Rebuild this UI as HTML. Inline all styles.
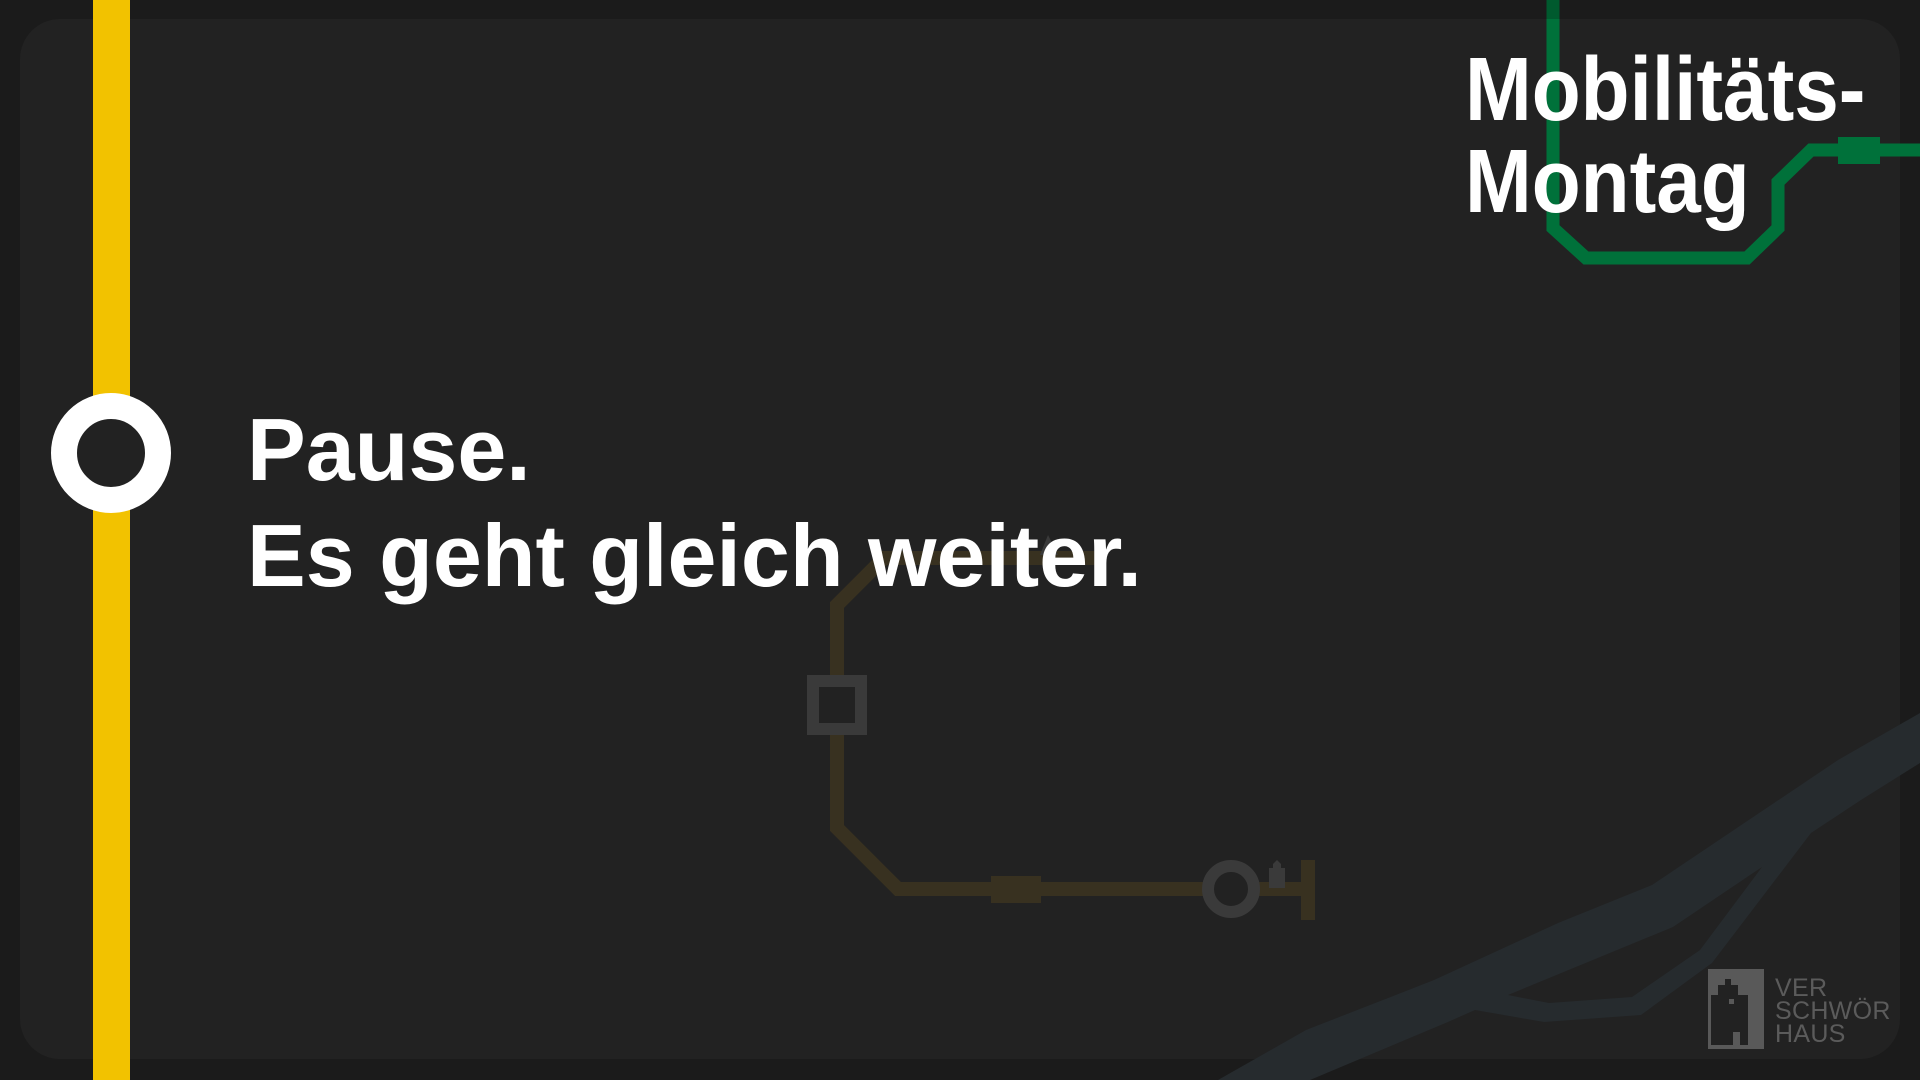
<!DOCTYPE html>
<html><head><meta charset="utf-8"><style>
html,body{margin:0;padding:0;width:1920px;height:1080px;overflow:hidden;background:#1b1b1b;font-family:"Liberation Sans",sans-serif}
.panel{position:absolute;left:20px;top:19px;width:1880px;height:1040px;border-radius:40px;background:#222222;overflow:hidden}
svg{position:absolute;left:0;top:0}
.t{position:absolute;left:247px;color:#fff;font-weight:bold;font-size:88px;line-height:1;white-space:nowrap}
.title{position:absolute;left:1465px;color:#fff;font-weight:bold;font-size:90px;line-height:1;white-space:nowrap;transform-origin:0 0;transform:scaleX(0.89)}
.logo{position:absolute;left:1775px;color:#5b5b5b;font-size:25px;line-height:23px;letter-spacing:0.3px}
</style></head><body>
<div class="panel"></div>
<svg width="1920" height="1080" viewBox="0 0 1920 1080">
 <path fill-rule="evenodd" fill="#262b2e" d="M1218,1080 L1306,1030 L1434,980 L1558,923 L1652,885 L1838,760 L1920,713 L1920,763 L1861,800 L1811,833 L1712,963 L1641,1015 L1544,1022 L1475,1010 L1448,1022 L1310,1080 Z M1762,867 L1673,927 L1508,995 L1549,1003 L1632,997 L1700,950 Z"/>
 <g fill="none" stroke-linejoin="miter">
  <polyline points="1100,558 884,558 837,605 837,828 898,889 1308,889" stroke="#383120" stroke-width="14"/>
  <polyline points="1553,-5 1553,228 1586,258 1747,258 1778,228 1778,182 1811,150 1925,150" stroke="#00713a" stroke-width="13"/>
  <polyline points="1553,0 1553,19" stroke="#005a2e" stroke-width="13"/>
 </g>
 <rect x="1838" y="137" width="42" height="27" fill="#00713a"/>
 <rect x="991" y="876" width="50" height="27" fill="#383120"/>
 <rect x="1301" y="860" width="14" height="60" fill="#383120"/>
 <rect x="813" y="681" width="48" height="48" fill="#222" stroke="#3a3a3a" stroke-width="12"/>
 <circle cx="1231" cy="889" r="23" fill="#222" stroke="#3a3a3a" stroke-width="12"/>
 <path d="M1269,888 L1269,868 L1273,868 L1273,864 L1277,860 L1281,864 L1281,868 L1285,868 L1285,888 Z" fill="#3a3a3a"/>
 <path d="M1040,555 L1048,535 L1058,555 Z" fill="#3a3a3a"/>
 <rect x="93" y="0" width="37" height="1080" fill="#f2c200"/>
 <circle cx="111" cy="453" r="47" fill="#222" stroke="#fff" stroke-width="26"/>
 <rect x="1708" y="969" width="56" height="80" fill="#595959"/>
 <path d="M1711,1045 L1711,995 L1718,995 L1718,985 L1725,985 L1725,979 L1731,979 L1731,985 L1738,985 L1738,995 L1748,995 L1748,1045 L1740,1045 L1740,1032 L1733,1032 L1733,1045 Z" fill="#222"/>
 <rect x="1729" y="999" width="5" height="5" fill="#595959"/>
</svg>
<div class="t" style="top:406px">Pause.</div>
<div class="t" style="top:512px">Es geht gleich weiter.</div>
<div class="title" style="top:45px">Mobilitäts-</div>
<div class="title" style="top:137px">Montag</div>
<div class="logo" style="top:977px">VER<br>SCHWÖR<br>HAUS</div>
</body></html>
